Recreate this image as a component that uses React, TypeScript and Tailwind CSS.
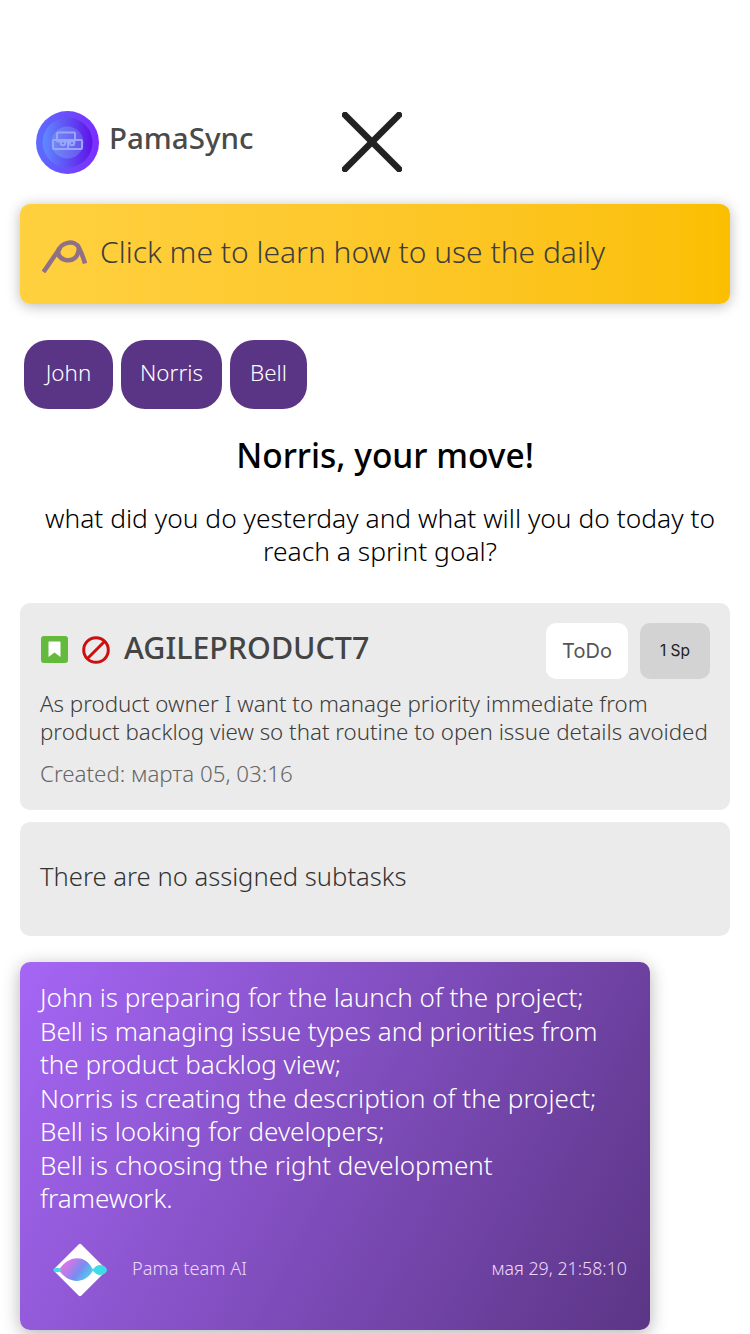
import React from 'react';

const sans = 'font-["Noto_Sans","Open_Sans",sans-serif]';

const participants = [
  { name: 'John', width: 'w-[89px]' },
  { name: 'Norris', width: 'w-[101px]' },
  { name: 'Bell', width: 'w-[77px]' },
];

const summary = [
  'John is preparing for the launch of the project;',
  'Bell is managing issue types and priorities from the product backlog view;',
  'Norris is creating the description of the project;',
  'Bell is looking for developers;',
  'Bell is choosing the right development framework.',
];

const LogoMark = () => (
  <svg width="63" height="63" viewBox="0 0 63 63" className="shrink-0">
    <defs>
      <linearGradient id="outer" x1="0" y1="0" x2="1" y2="0">
        <stop offset="0" stopColor="#5c6cff" />
        <stop offset="1" stopColor="#7d2cff" />
      </linearGradient>
      <linearGradient id="inner" x1="0" y1="0" x2="1" y2="0">
        <stop offset="0" stopColor="#5f8bff" />
        <stop offset="1" stopColor="#5f12e8" />
      </linearGradient>
      <linearGradient id="core" x1="0" y1="0" x2="1" y2="0">
        <stop offset="0" stopColor="#6f8cf8" />
        <stop offset="1" stopColor="#6a52f0" />
      </linearGradient>
    </defs>
    <circle cx="31.5" cy="31.5" r="31.5" fill="url(#outer)" />
    <circle cx="31.5" cy="31.5" r="25" fill="url(#inner)" />
    <circle cx="31.5" cy="31.5" r="16" fill="url(#core)" />
    <g fill="none" stroke="#98a6fb" strokeWidth="2">
      <rect x="21" y="21.5" width="18" height="9" rx="1" />
      <rect x="17" y="29" width="15" height="9" rx="1" />
      <rect x="32" y="29" width="14" height="9" rx="1" />
      <circle cx="27" cy="32" r="2.2" />
      <circle cx="36" cy="32" r="2.2" />
    </g>
  </svg>
);

const CloseMark = () => (
  <svg width="60" height="60" viewBox="0 0 60 60" fill="none" stroke="#222222" strokeWidth="6.5" strokeLinecap="round">
    <path d="M3 3 L57 57" />
    <path d="M57 3 L3 57" />
  </svg>
);

const HelpMark = () => (
  <svg width="45" height="33" viewBox="0 0 45 33" fill="none" stroke="#8f7085" strokeWidth="4.5" className="shrink-0">
    <path d="M1.5 32 L18 8" />
    <path d="M16 12 C18 2 33 -1 37 8 C39 12 41.5 18 43 23.5" />
    <path d="M16 12 C17 21 28 22 33 18 C35.5 16 36.5 12 37 8" />
  </svg>
);

const StoryBadge = () => (
  <svg width="27" height="27" viewBox="0 0 27 27" className="shrink-0">
    <rect width="27" height="27" rx="3" fill="#63ba3c" />
    <path d="M7.5 6 Q7.5 5.5 8 5.5 H19 Q19.5 5.5 19.5 6 V21 L13.5 16.5 L7.5 21 Z" fill="#ffffff" />
  </svg>
);

const BlockedMark = () => (
  <svg width="28" height="28" viewBox="0 0 28 28" fill="none" stroke="#cc0f0f" strokeWidth="3" className="shrink-0">
    <circle cx="14" cy="14" r="12.3" />
    <path d="M5.5 22.5 L22.5 5.5" />
  </svg>
);

const AiMark = () => (
  <svg width="54" height="54" viewBox="0 0 54 54" className="shrink-0">
    <defs>
      <linearGradient id="fish" x1="0" y1="0" x2="1" y2="0.5">
        <stop offset="0" stopColor="#f070e6" />
        <stop offset="0.35" stopColor="#c878ea" />
        <stop offset="0.7" stopColor="#7a8cf0" />
        <stop offset="1" stopColor="#55c4ee" />
      </linearGradient>
    </defs>
    <rect x="8" y="8" width="38" height="38" rx="2" fill="#ffffff" transform="rotate(45 27 27)" />
    <path d="M6 27 C13 15 30 9 39 25 C40 27 40 28 39 29 C30 43 13 39 6 27 Z" fill="url(#fish)" />
    <path d="M0 27 C2 24 6 24 9 27 C6 30 2 30 0 27 Z" fill="#45d8e8" />
    <path d="M37 27 C41 27 42 22 47 22 C51 22 54 25 54 27 C54 29 51 32 47 32 C42 32 41 27 37 27 Z" fill="#3fdce8" />
  </svg>
);

export default function App() {
  return (
    <div className={`${sans} w-[750px] h-[1334px] overflow-hidden bg-white`}>
      {/* Header */}
      <div className="flex items-center pt-[110px] pl-9 h-[174px]">
        <LogoMark />
        <span className="ml-[10px] mb-2 text-[29.5px] leading-none font-medium text-[#4a4a4a] w-[233px]">PamaSync</span>
        <CloseMark />
      </div>

      <div className="px-5">
        {/* Daily help banner */}
        <div className="mt-[30px] h-[100px] flex items-center pl-[22px] rounded-[10px] bg-gradient-to-r from-[#ffd03f] to-[#fbbf00] shadow-[0_2px_14px_rgba(0,0,0,0.28)]">
          <span className="mt-[5px]"><HelpMark /></span>
          <span className="ml-[13px] mb-[5px] text-[30px] font-light text-[#3d3d3d]">Click me to learn how to use the daily</span>
        </div>

        {/* Participants */}
        <div className="mt-9 ml-1 flex gap-2">
          {participants.map(p => (
            <div key={p.name} className={`${p.width} h-[69px] pb-1 flex items-center justify-center rounded-[24px] bg-[#5b3585] text-white text-[22.4px] font-light`}>
              {p.name}
            </div>
          ))}
        </div>

        <h1 className="mt-[25px] pl-5 text-center text-[33.5px] leading-[42px] font-medium text-black">Norris, your move!</h1>
        <p className="mt-[26px] pl-[10px] text-center text-[26.4px] leading-[33px] font-light text-black">
          what did you do yesterday and what will you do today to reach a sprint goal?
        </p>

        {/* Issue card */}
        <div className="mt-[35px] h-[207px] rounded-[10px] bg-[#ebebeb] px-5 pt-5">
          <div className="flex items-center h-14">
            <span className="ml-px mb-[3px]"><StoryBadge /></span>
            <span className="ml-[14px] mb-[3px]"><BlockedMark /></span>
            <span className="ml-[14px] mb-[6px] text-[30.4px] font-medium text-[#444444]">AGILEPRODUCT7</span>
            <div className="ml-auto flex gap-3">
              <div className={`w-[82px] h-14 flex items-center justify-center rounded-[10px] bg-white text-[20px] text-[#555555] font-["Inter",sans-serif]`}>ToDo</div>
              <div className={`w-[70px] h-14 flex items-center justify-center rounded-[10px] bg-[#d3d3d3] text-[15.5px] text-[#222222] font-["Inter",sans-serif]`}>1 Sp</div>
            </div>
          </div>
          <p className="mt-[11px] text-[22.3px] leading-[28px] font-light text-[#3d3d3d] whitespace-pre">
            {'As product owner I want to manage priority immediate from\nproduct backlog view so that routine to open issue details avoided'}
          </p>
          <p className="mt-[14px] text-[22.3px] leading-[28px] font-light text-[#666666]">Created: марта 05, 03:16</p>
        </div>

        {/* Subtasks */}
        <div className="mt-3 h-[114px] pb-1 flex items-center rounded-[10px] bg-[#ebebeb] px-5 text-[25.6px] font-light text-[#333333]">
          There are no assigned subtasks
        </div>

        {/* AI summary */}
        <div className="mt-[26px] w-[630px] h-[368px] rounded-[10px] bg-[linear-gradient(118deg,#a566f5,#5b3585)] shadow-[0_4px_18px_rgba(0,0,0,0.3)] px-5 pt-[19px]">
          <div className="text-[26px] leading-[33.5px] font-light text-white">
            {summary.map(line => (
              <p key={line}>{line}</p>
            ))}
          </div>
          <div className="mt-[27px] ml-[13px] flex items-center">
            <AiMark />
            <span className="ml-[25px] mb-[2px] text-[18.2px] font-light text-[#ecd9fa]">Pama team AI</span>
            <span className="ml-auto mr-[3px] mb-[2px] text-[17.8px] font-light text-[#ecd9fa]">мая 29, 21:58:10</span>
          </div>
        </div>
      </div>
    </div>
  );
}
